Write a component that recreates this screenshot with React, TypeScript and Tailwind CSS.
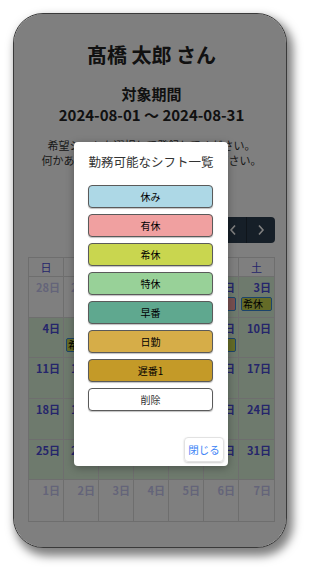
import React from "react";

type Cell = { d: number; other?: boolean; ev?: string };

const font = { fontFamily: '"Noto Sans CJK JP", "Noto Sans", sans-serif' };

const weeks: Cell[][] = [
  [{ d: 28, other: true }, { d: 29, other: true }, { d: 30, other: true }, { d: 31, other: true }, { d: 1 }, { d: 2, ev: "有休" }, { d: 3, ev: "希休" }],
  [{ d: 4 }, { d: 5, ev: "希休" }, { d: 6 }, { d: 7 }, { d: 8 }, { d: 9, ev: "希休" }, { d: 10 }],
  [{ d: 11 }, { d: 12 }, { d: 13 }, { d: 14 }, { d: 15 }, { d: 16 }, { d: 17 }],
  [{ d: 18 }, { d: 19 }, { d: 20 }, { d: 21 }, { d: 22 }, { d: 23 }, { d: 24 }],
  [{ d: 25 }, { d: 26 }, { d: 27 }, { d: 28 }, { d: 29 }, { d: 30 }, { d: 31 }],
  [{ d: 1, other: true }, { d: 2, other: true }, { d: 3, other: true }, { d: 4, other: true }, { d: 5, other: true }, { d: 6, other: true }, { d: 7, other: true }],
];

const dayNames = ["日", "月", "火", "水", "木", "金", "土"];

const shifts: { label: string; cls: string }[] = [
  { label: "休み", cls: "bg-[#add8e6] text-black" },
  { label: "有休", cls: "bg-[#f0a0a0] text-black" },
  { label: "希休", cls: "bg-[#c9d64f] text-black" },
  { label: "特休", cls: "bg-[#98d198] text-black" },
  { label: "早番", cls: "bg-[#5fa88f] text-black" },
  { label: "日勤", cls: "bg-[#d6ad48] text-black" },
  { label: "遅番1", cls: "bg-[#c49a28] text-black" },
  { label: "削除", cls: "bg-white text-[#333]" },
];

function EventBadge({ label }: { label: string }) {
  const bg = label === "有休" ? "bg-[#f0a0a0]" : "bg-[#c9d64f]";
  return (
    <div className={`mx-[2px] mt-[3px] h-[14px] border border-[#3788d8] rounded-[2px] ${bg} text-[10px] leading-[12px] text-black pl-[1px] overflow-hidden whitespace-nowrap`}>
      {label}
    </div>
  );
}

export default function App() {
  return (
    <div className="w-[313px] h-[575px] bg-white pt-[13px] pl-[13px]" style={font}>
      <div className="relative w-[274px] h-[535px] rounded-[30px] border border-[#3a3a3a] overflow-hidden bg-white shadow-[4px_6px_10px_2px_rgba(0,0,0,0.5)]">
        <div className="flex flex-col pl-[14px] pr-[11px] pt-[27px]">
          <div className="text-center text-[20px] leading-[28px] font-bold text-[#222]">髙橋 太郎 さん</div>
          <div className="mt-[14px] text-center text-[15px] leading-[21px] font-bold text-[#222]">対象期間</div>
          <div className="text-center text-[15px] leading-[21px] font-bold text-[#222]">2024-08-01 〜 2024-08-31</div>
          <div className="mt-[13px] text-center text-[11px] leading-[15px] text-[#333] whitespace-nowrap">
            <div>希望シフトを選択して登録してください。</div>
            <div>何かありましたら管理者にご連絡ください。</div>
          </div>
          <div className="mt-[49px] flex justify-end items-center h-[26px]">
            <div className="flex h-[26px] rounded-[4px] overflow-hidden bg-[#2c3e50]">
              <div className="w-[28px] flex items-center justify-center border-r border-[#1e2b37]">
                <svg width="8" height="12" viewBox="0 0 8 12"><path d="M6 1.5 L2 6 L6 10.5" fill="none" stroke="#fff" strokeWidth="1.6" /></svg>
              </div>
              <div className="w-[28px] flex items-center justify-center">
                <svg width="8" height="12" viewBox="0 0 8 12"><path d="M2 1.5 L6 6 L2 10.5" fill="none" stroke="#fff" strokeWidth="1.6" /></svg>
              </div>
            </div>
          </div>
          <div className="mt-[14px] border border-[#ddd] w-[247px]">
            <div className="grid grid-cols-7 h-[19px] border-b border-[#ddd]">
              {dayNames.map((n, i) => (
                <div key={n} className={`text-center text-[11px] leading-[18px] text-[#4b4bd6] ${i < 6 ? "border-r border-[#ddd]" : ""}`}>{n}</div>
              ))}
            </div>
            {weeks.map((w, wi) => (
              <div key={wi} className={`grid grid-cols-7 h-[40.7px] ${wi < 5 ? "border-b border-[#ddd]" : ""}`}>
                {w.map((c, ci) => (
                  <div key={ci} className={`${ci < 6 ? "border-r border-[#ddd]" : ""} ${c.other ? "bg-white" : "bg-[#ddf5da]"}`}>
                    <div className={`text-right pr-[3px] pt-[3px] text-[11px] leading-[14px] font-bold text-[#4b4bd6] ${c.other ? "opacity-30" : ""}`}>{c.d}日</div>
                    {c.ev ? <EventBadge label={c.ev} /> : null}
                  </div>
                ))}
              </div>
            ))}
          </div>
        </div>

        <div className="absolute inset-0 bg-black/50" />

        <div className="absolute left-[60px] top-[128px] w-[154px] h-[324px] bg-white rounded-[4px] shadow-[0_2px_8px_rgba(0,0,0,0.3)] flex flex-col">
          <div className="pt-[11px] text-center text-[12.5px] leading-[18px] text-[#333]">勤務可能なシフト一覧</div>
          <div className="mt-[14px] flex flex-col gap-[6px] pl-[14px]">
            {shifts.map((s) => (
              <div key={s.label} className={`w-[125px] h-[23px] rounded-[4px] border border-[#5a5a5a] shadow-[0_1px_1px_rgba(0,0,0,0.25)] flex items-center justify-center text-[10px] ${s.cls}`}>
                {s.label}
              </div>
            ))}
          </div>
          <div className="mt-auto mb-[4px] mr-[4px] self-end w-[40px] h-[25px] rounded-[4px] border border-[#e2e2e2] shadow-[0_1px_2px_rgba(0,0,0,0.2)] flex items-center justify-center text-[10.5px] text-[#3b82f6]">
            閉じる
          </div>
        </div>
      </div>
    </div>
  );
}
